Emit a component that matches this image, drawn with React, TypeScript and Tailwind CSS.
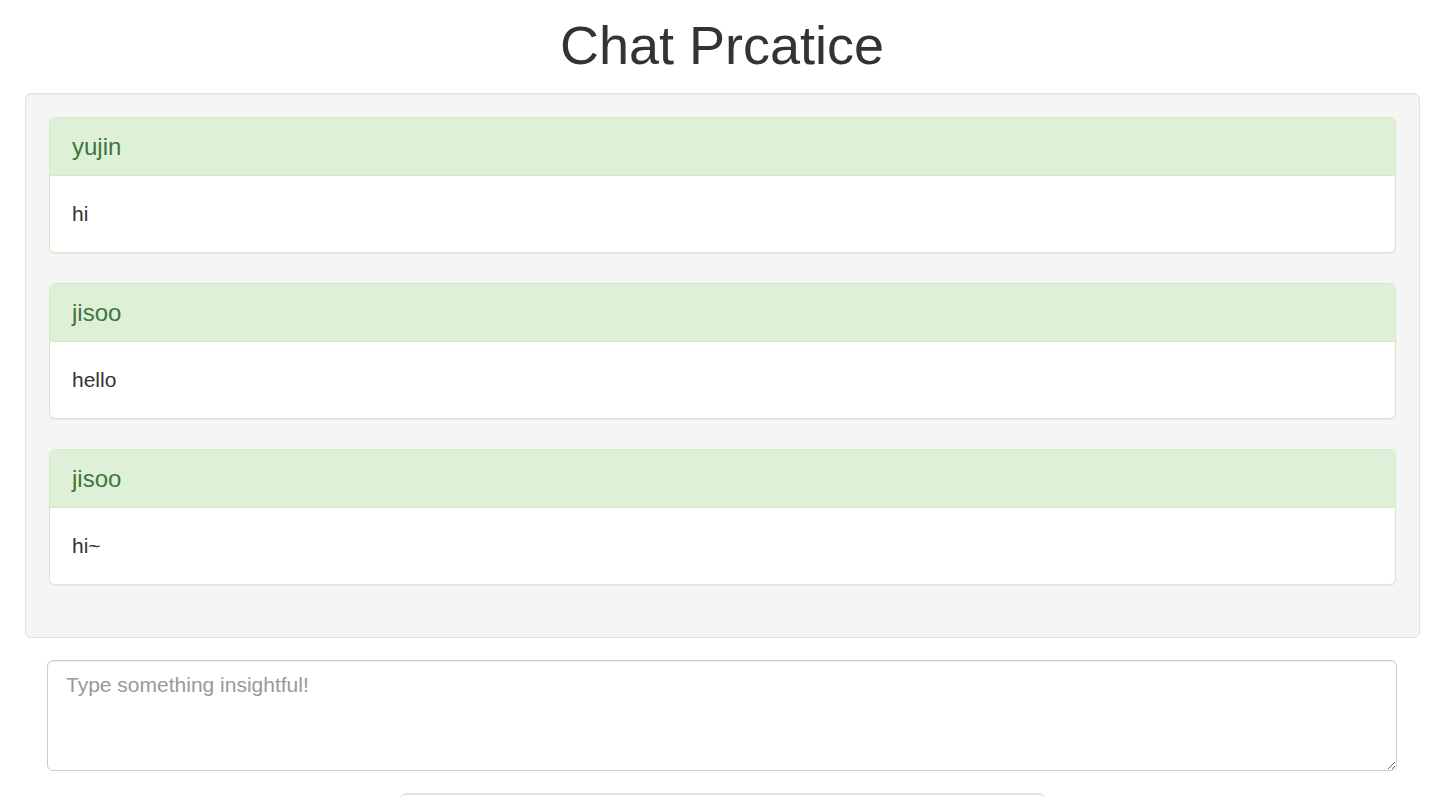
const messages = [
  { user: "yujin", text: "hi" },
  { user: "jisoo", text: "hello" },
  { user: "jisoo", text: "hi~" },
];

export default function App() {
  return (
    <div
      className="min-h-screen bg-white text-[#333] overflow-hidden"
      style={{ fontFamily: '"Liberation Sans", Arial, sans-serif' }}
    >
      <h1 className="pt-[15px] pr-[6px] text-center text-[54px] leading-[60px] font-normal text-[#333]">
        Chat Prcatice
      </h1>

      {/* Message well */}
      <div className="mt-[18px] ml-[25px] w-[1395px] rounded-[6px] border border-[#e3e3e3] bg-[#f5f5f5] px-[23px] pt-[23px] pb-[22px] shadow-[inset_0_1px_1px_rgba(0,0,0,0.05)]">
        {messages.map((m, i) => (
          <div
            key={i}
            className="mb-[30px] overflow-hidden rounded-[6px] border border-[#d6e9c6] bg-white shadow-[0_1px_1px_rgba(0,0,0,0.05)]"
          >
            <div className="border-b border-[#d6e9c6] bg-[#dff0d8] px-[22px] py-[15px] text-[24px] leading-[27px] text-[#3c763d]">
              {m.user}
            </div>
            <div className="px-[22px] py-[23px] text-[21px] leading-[30px] text-[#333]">
              {m.text}
            </div>
          </div>
        ))}
      </div>

      {/* Input */}
      <div className="mt-[22px] ml-[47px] w-[1350px]">
        <textarea
          rows={3}
          placeholder="Type something insightful!"
          className="block h-[111px] w-full resize-y rounded-[6px] border border-[#ccc] bg-white px-[18px] py-[9px] text-[21px] leading-[30px] text-[#555] placeholder:text-[#999] shadow-[inset_0_1px_1px_rgba(0,0,0,0.075)] outline-none"
        />
      </div>

      <div className="mt-[22px] ml-[400px] h-[40px] w-[645px] rounded-t-[6px] border-t-2 border-[#e3e3e3]" />
    </div>
  );
}
